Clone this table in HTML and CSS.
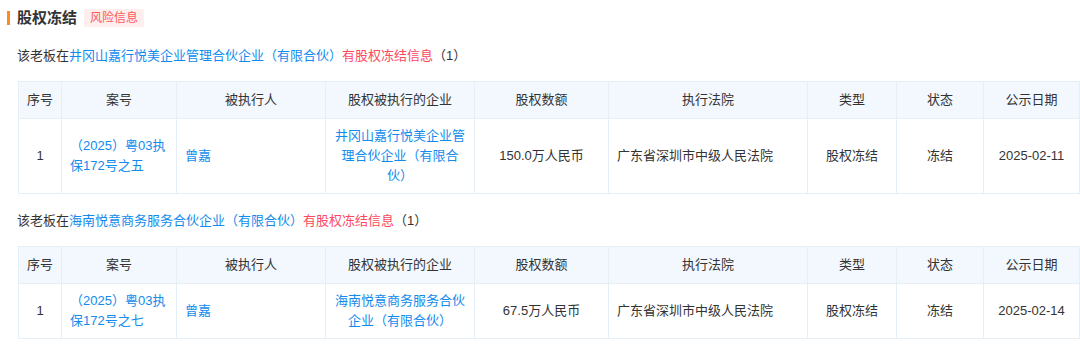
FILE: index.html
```html
<!DOCTYPE html>
<html lang="zh-CN">
<head>
<meta charset="utf-8">
<title>股权冻结</title>
<link rel="stylesheet" href="styles.css">
</head>
<body>
<div class="panel">
  <div class="title-row">
    <span class="title-bar"></span>
    <h2 class="title">股权冻结</h2>
    <span class="tag">风险信息</span>
  </div>

  <div class="block">
    <p class="summary">该老板在<a class="link">井冈山嘉行悦美企业管理合伙企业（有限合伙）</a><span class="red">有股权冻结信息</span>（1）</p>
    <table class="grid">
      <colgroup>
        <col class="c1"><col class="c2"><col class="c3"><col class="c4"><col class="c5"><col class="c6"><col class="c7"><col class="c8"><col class="c9">
      </colgroup>
      <thead>
        <tr><th>序号</th><th>案号</th><th>被执行人</th><th>股权被执行的企业</th><th>股权数额</th><th>执行法院</th><th>类型</th><th>状态</th><th>公示日期</th></tr>
      </thead>
      <tbody>
        <tr>
          <td class="center">1</td>
          <td class="left"><a class="link">（2025）粤03执保172号之五</a></td>
          <td class="left"><a class="link">曾嘉</a></td>
          <td class="center"><a class="link">井冈山嘉行悦美企业管理合伙企业（有限合伙）</a></td>
          <td class="center">150.0万人民币</td>
          <td class="left">广东省深圳市中级人民法院</td>
          <td class="center">股权冻结</td>
          <td class="center">冻结</td>
          <td class="center">2025-02-11</td>
        </tr>
      </tbody>
    </table>
  </div>

  <div class="block">
    <p class="summary">该老板在<a class="link">海南悦意商务服务合伙企业（有限合伙）</a><span class="red">有股权冻结信息</span>（1）</p>
    <table class="grid">
      <colgroup>
        <col class="c1"><col class="c2"><col class="c3"><col class="c4"><col class="c5"><col class="c6"><col class="c7"><col class="c8"><col class="c9">
      </colgroup>
      <thead>
        <tr><th>序号</th><th>案号</th><th>被执行人</th><th>股权被执行的企业</th><th>股权数额</th><th>执行法院</th><th>类型</th><th>状态</th><th>公示日期</th></tr>
      </thead>
      <tbody>
        <tr>
          <td class="center">1</td>
          <td class="left"><a class="link">（2025）粤03执保172号之七</a></td>
          <td class="left"><a class="link">曾嘉</a></td>
          <td class="center"><a class="link">海南悦意商务服务合伙企业（有限合伙）</a></td>
          <td class="center">67.5万人民币</td>
          <td class="left">广东省深圳市中级人民法院</td>
          <td class="center">股权冻结</td>
          <td class="center">冻结</td>
          <td class="center">2025-02-14</td>
        </tr>
      </tbody>
    </table>
  </div>
</div>
</body>
</html>
```

FILE: styles.css
```css
html, body {
  margin: 0;
  padding: 0;
  background: #ffffff;
}

body {
  font-family: "Liberation Sans", "Noto Sans CJK SC", sans-serif;
  font-size: 13px;
  color: #333333;
}

.panel {
  padding: 0 0 0 7px;
}

.title-row {
  display: flex;
  align-items: center;
  height: 36px;
}

.title-bar {
  width: 3px;
  height: 14px;
  background: #ff8a1f;
  margin-right: 7px;
}

.title {
  margin: 0;
  font-size: 15px;
  font-weight: bold;
  color: #333333;
  line-height: 20px;
}

.tag {
  margin-left: 7px;
  height: 18px;
  line-height: 18px;
  padding: 0 6px;
  font-size: 12px;
  color: #fd5a5a;
  background: #feeeee;
  border-radius: 2px;
}

.block {
  padding-left: 10px;
}

.summary {
  margin: 9.5px 0 15px 0;
  line-height: 20px;
  font-size: 13px;
}

.block + .block .summary {
  margin-top: 17px;
}

.link {
  color: #128bed;
  text-decoration: none;
}

.red {
  color: #fd485e;
}

.grid {
  margin-left: 1px;
  width: 1061px;
  table-layout: fixed;
  border-collapse: collapse;
  font-size: 13px;
  line-height: 20px;
}

.grid th,
.grid td {
  border: 1px solid #e6eef6;
  padding: 7px 8px;
  font-weight: normal;
  color: #333333;
}

.grid th {
  background: #f2f8fe;
  padding: 8px 4px;
  text-align: center;
}

.grid td.center { text-align: center; }
.grid td.left { text-align: left; }

.c1 { width: 43px; }
.c2 { width: 115px; }
.c3 { width: 149px; }
.c4 { width: 149px; }
.c5 { width: 134px; }
.c6 { width: 199px; }
.c7 { width: 89px; }
.c8 { width: 87px; }
.c9 { width: 96px; }
```
